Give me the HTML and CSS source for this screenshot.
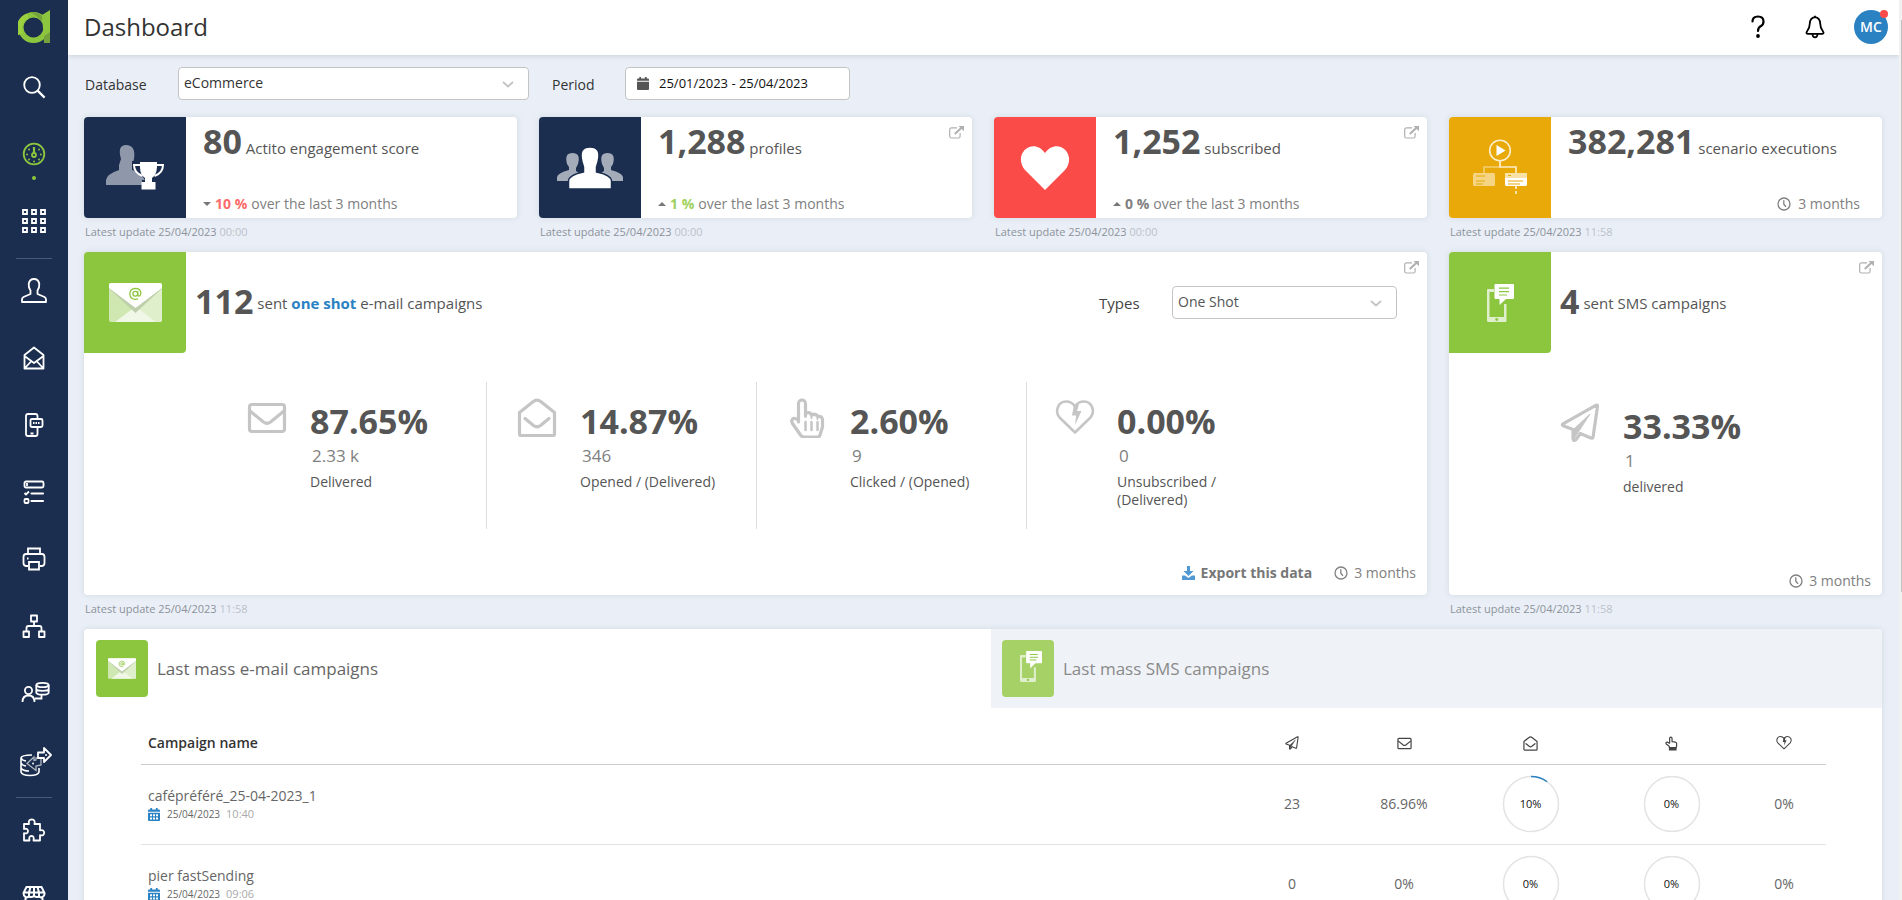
FILE: index.html
```html
<!DOCTYPE html>
<html lang="en">
<head>
<meta charset="utf-8">
<title>Dashboard</title>
<link rel="stylesheet" href="styles.css">
</head>
<body>
<svg class="defs" aria-hidden="true">
  <symbol id="i-external" viewBox="0 0 15 13"><path d="M8 1.8H2.5a1.8 1.8 0 0 0-1.8 1.8v6.6A1.8 1.8 0 0 0 2.500 12h6.800a1.800 1.800 0 0 0 1.800-1.800V7" fill="none" stroke="currentColor" stroke-width="1.200"/><path d="M5.800 8 13 1.200" stroke="currentColor" stroke-width="2"/><path d="M9.500 0H15v5.300z" fill="currentColor"/></symbol>
  <symbol id="i-chevron" viewBox="0 0 12 7"><path d="M1 1l5 4.500L11 1" fill="none" stroke="#c4c4c4" stroke-width="1.800"/></symbol>
  <symbol id="i-clock" viewBox="0 0 14 14"><circle cx="7" cy="7" r="6" fill="none" stroke="currentColor" stroke-width="1.300"/><path d="M6.800 3.200v4L9 9.700" fill="none" stroke="currentColor" stroke-width="1.300"/></symbol>
  <symbol id="i-envelope" viewBox="0 0 40 40"><g fill="none" stroke="currentColor" stroke-width="3.200" stroke-linejoin="round"><rect x="2.500" y="6.500" width="35" height="27" rx="2.500"/><path d="M3 13l13.500 11q3.500 2.500 7 0L37 13"/></g></symbol>
  <symbol id="i-open" viewBox="0 0 40 40"><g fill="none" stroke="currentColor" stroke-width="3.200" stroke-linejoin="round"><path d="M2.500 14.500v21.500q0 1.500 1.500 1.500h32q1.500 0 1.500-1.500V14.500L24 3.800q-4-3.200-8 0z"/><path d="M8 20.500l8.500 7q3.500 2.500 7 0l8.500-7" stroke-linecap="round"/></g></symbol>
  <symbol id="i-hand" viewBox="0 0 40 40"><g fill="none" stroke="currentColor" stroke-width="3.200" stroke-linecap="round" stroke-linejoin="round"><path d="M11.500 24V5.500a3 3 0 0 1 7 0V18v-2.500q4-2.500 6 1.500 4-2 6.500 1.500 4.500-.5 4.500 3.500v7l-2.500 8q-.5 2-2.500 2H17q-2 0-3.500-2l-8-11.500q-2-3.500 1-5 2-1 5 2"/><path d="M18.500 14v5M24.500 16v4M30.500 18v3" stroke-width="2"/></g><path d="M18.500 24v8M24.500 24v8M30.500 24v8" stroke="currentColor" stroke-width="2.500" stroke-linecap="round"/></symbol>
  <symbol id="i-thumb" viewBox="0 0 14 16"><path d="M5 8V2.500a1.300 1.300 0 0 1 2.600 0V6q4.900.3 4.900 1.800V11l-.7 1.500h-7L4.500 11 1.300 8.500Q.3 6.500 2.500 6.500L5 8" fill="none" stroke="currentColor" stroke-width="1.300" stroke-linejoin="round"/><path d="M4.200 12h8.300v3.500H4.200z" fill="currentColor"/></symbol>
  <symbol id="i-broken" viewBox="0 0 40 40"><path d="M20 34.500 4.500 19.500C-.5 13.500 3 3.500 11 3.500q6 0 9 5 3-5 9-5c8 0 11.500 10 6.500 16z" fill="none" stroke="currentColor" stroke-width="2.600" stroke-linejoin="round"/><path d="M19 6.500h5L22 13h4.500L20 27l1.200-9.500H17z" fill="currentColor"/></symbol>
  <symbol id="i-plane" viewBox="0 0 40 40"><g fill="none" stroke="currentColor" stroke-width="3.200" stroke-linejoin="round"><path d="M37.500 3.500q.3-2-1.800-1.200L3 20.800q-1.500 1.200.2 2L13 26.500v9.500q.5 2.500 2.800.8l4.500-6.300 10.500 4.500q1.900.6 2.300-1.200z"/><path d="M13 27 30 11 18 29.500l-4 6z" fill="currentColor" stroke-width="1"/></g></symbol>
  <symbol id="i-cal" viewBox="0 0 12 13"><path d="M0 2.500q0-1 1-1h1.300V0h1.800v1.500h3.800V0h1.800v1.500H11q1 0 1 1v1.200H0z" fill="#2b82c3"/><path d="M0 4.700h12V12q0 1-1 1H1q-1 0-1-1z" fill="#2b82c3"/><path d="M2 6.300h2v2H2zm3 0h2v2H5zm3 0h2v2H8zM2 9.500h2v2H2zm3 0h2v2H5zm3 0h2v2H8z" fill="#fff"/></symbol>
  <symbol id="i-mailart" viewBox="0 0 53 39"><rect width="53" height="39" rx="2" fill="#cfe7b0"/><path d="M26.500 24 53 5v32q0 2-2 2h-4z" fill="#dfeecb"/><path d="M6 39 26.500 23.500 47 39z" fill="#f0f7e6"/><path d="M0 5.500 26.500 30 53 5.500V2H0z" fill="#bfceab"/><path d="M2 0h49q2 0 2 2v3L26.500 25 0 5V2q0-2 2-2z" fill="#fff"/><g fill="none" stroke="#8cc63f" stroke-width="1.300"><circle cx="26.300" cy="10.800" r="2.400"/><path d="M28.800 8.300v3.700q.3 1.500 1.800 1 1.300-1 1.300-3-.5-4.500-5.500-4.600-5.500.4-5.600 5.600.4 5.400 5.900 5.300l2.300-.4"/></g></symbol>
  <symbol id="i-smsart" viewBox="0 0 27 38"><path d="M1 5h6v3H2.500v25H17V20h2.500v16.500q0 1.500-1.500 1.500H1.500Q0 38 0 36.500V6q0-1 1-1z" fill="#e0efcb"/><path d="M2.500 33H17v0h2v5H1v-5z" fill="#e0efcb"/><circle cx="9.700" cy="35.500" r="1.400" fill="#8cc63f"/><path d="M8.500 0H26q1 0 1 1v13q0 1-1 1h-7l-6.500 6v-6h-4q-1 0-1-1V1q0-1 1-1z" fill="#fff"/><path d="M12 4.200h10M12 7.700h10M12 11h8" stroke="#8cc63f" stroke-width="1.200"/></symbol>
</svg>
<div class="app">
  <nav class="side" aria-label="Main">
    <a class="logo" href="#" aria-label="Home"><svg width="32" height="34" viewBox="0 0 32 34"><circle cx="15.500" cy="17.500" r="12.700" fill="none" stroke="#8cc63f" stroke-width="5.500"/><path d="M2.800 24A12.700 12.700 0 0 1 10 6" fill="none" stroke="#9bd03f" stroke-width="5.500"/><path d="M12 2.500Q22 1 26 9l-3 2Q19 5 12 2.500z" fill="#73a33a"/><path d="M24 5 32 0v32l-6 1z" fill="#8cc63f"/><path d="M26 26l6-4v11h-6z" fill="#73a33a"/></svg></a>
    <a class="nav" href="#" aria-label="Search"><svg width="24" height="24" viewBox="0 0 24 24"><circle cx="10" cy="10" r="7.800"/><path d="M15.600 15.600l7 7" stroke-width="2.200"/></svg></a>
    <a class="nav active" href="#" aria-label="Dashboard"><svg width="24" height="24" viewBox="0 0 24 24"><circle cx="12" cy="12" r="10.300"/><circle cx="12" cy="13" r="2"/><path d="M12 5v6" stroke-width="2.200"/><path d="M5 12.500h.1M18.800 12.500h.1M7 7.500h.1M17 7.500h.1M7 17.500h.1M17 17.500h.1M12 19.500h.1" stroke-linecap="round"/></svg></a>
    <a class="nav" href="#" aria-label="Applications"><svg width="24" height="24" viewBox="0 0 24 24"><path d="M1 1h4v4H1zm9 0h4v4h-4zm9 0h4v4h-4zM1 10h4v4H1zm9 0h4v4h-4zm9 0h4v4h-4zM1 19h4v4H1zm9 0h4v4h-4zm9 0h4v4h-4z"/></svg></a>
    <hr class="sep">
    <a class="nav" href="#" aria-label="Profiles"><svg width="26" height="25" viewBox="0 0 26 25"><path d="M9.500 12.500Q7.500 10 7.700 6 8.500 1 13 1t5.300 5q.2 4-1.800 6.500V16l7 3q1.500 1 1.500 2.500V24H1v-2.500Q1 20 2.500 19l7-3z" stroke-linejoin="round"/></svg></a>
    <a class="nav" href="#" aria-label="E-mail"><svg width="24" height="24" viewBox="0 0 24 24"><path d="M2.500 9 12 1.500 21.500 9v13.500h-19zM2.500 10l9.500 7 9.500-7M3 22l6.500-7M21 22l-6.500-7" stroke-linejoin="round"/></svg></a>
    <a class="nav" href="#" aria-label="Mobile"><svg width="24" height="24" viewBox="0 0 24 24"><path d="M15.500 5V3q0-2-2-2H6Q4 1 4 3v18q0 2 2 2h7.500q2 0 2-2v-7.500M8.500 20.500h3"/><path d="M10 6h9q1.500 0 1.500 1.500v5Q20.500 14 19 14h-9q-1.500 0-1.500-1.500v-5Q8.500 6 10 6z"/><path d="M11 10h7" stroke-dasharray="1.500 1"/></svg></a>
    <a class="nav" href="#" aria-label="Forms"><svg width="24" height="24" viewBox="0 0 24 24"><rect x="2.500" y="1.500" width="19" height="6" rx="1.500"/><path d="M5 3v3M2.500 13l1.500 1.500 3-3"/><path d="M9.500 13.500h11.500M9.500 21h11.500" stroke-width="2.200" stroke-linecap="round"/><rect x="2.500" y="19" width="4" height="4" rx="1"/></svg></a>
    <a class="nav" href="#" aria-label="Print"><svg width="24" height="24" viewBox="0 0 24 24"><path d="M6 7V1.500h12V7M6 19H4q-2.500-.3-2.500-3V10Q1.500 7 4 7h16q2.500 0 2.500 3v6q0 2.700-2.500 3h-2"/><path d="M7 15h10v7.500H7zM5 11.500h1.500"/></svg></a>
    <a class="nav" href="#" aria-label="Scenarios"><svg width="24" height="24" viewBox="0 0 24 24"><path d="M9 1.500h6v6H9zM1.500 17.500h5.500v5.500H1.500zM17 17.500h5.500v5.500H17zM12 8v4M4.500 17v-3q0-2 2-2h11q2 0 2 2v3" stroke-linejoin="round"/></svg></a>
    <a class="nav" href="#" aria-label="Profile data"><svg class="wide" width="30" height="24" viewBox="0 0 30 24"><circle cx="7.500" cy="9.500" r="3.600"/><path d="M1.500 21q0-6.500 6-6.500t6 6.500M14 17.500h6.500V14"/><ellipse cx="21.500" cy="4" rx="6.200" ry="2.200"/><path d="M15.300 4v7.500q0 2.200 6.200 2.200t6.200-2.200V4M15.300 7.800q0 2 6.200 2t6.200-2"/></svg></a>
    <a class="nav" href="#" aria-label="Data transfer"><svg class="thin" width="32" height="30" viewBox="0 0 32 30"><path d="M12 8Q1.500 8 1 11v14q1 3.500 9 3.500t9-3.500v-4M1 11q1 2.500 5 3M1 16q1 2.500 5 3M1 21q2 3 8 3" stroke-width="1.600"/><path d="M7 16.500l7-6.500v3.500l2-.5v-2h5v7l-5 1v4.500z" opacity=".65"/><path d="M18 5.500h6V1l7 7-7 7v-4h-6z" stroke-width="1.800" stroke-linejoin="round"/><path d="M26 8h.1M13 16.500h.1" stroke-width="1.800" stroke-linecap="round"/></svg></a>
    <hr class="sep">
    <a class="nav" href="#" aria-label="Extensions"><svg width="24" height="24" viewBox="0 0 24 24"><path d="M7 6h-5v5q4-1 4 2.200-.3 3-4 2v7.300h5.500q-1-4.500 2-4.700 3 .2 2 4.700h6.500v-5.300q4 1 4.200-2.400-.2-3.500-4.200-2.500V6H12.500q1-4.500-2.700-4.700Q6 1.500 7 6z" stroke-linejoin="round"/></svg></a>
    <a class="nav" href="#" aria-label="Marketplace"><svg width="24" height="24" viewBox="0 0 24 24"><path d="M4.500 2h15l3 6q.3 3-2 4t-3.500-.8q-2 1.800-5 0-3 1.800-5 0Q5.500 13 3.500 12T1.500 8zM1.500 7.500h21M8.500 2 7 7.500V11M15.500 2 17 7.500V11M12 2v9M3.500 13v9h17v-9" stroke-width="2"/></svg></a>
  </nav>
  <div class="page">
    <header class="top">
      <h1 class="title">Dashboard</h1>
      <div class="tools">
        <button class="tool" aria-label="Help"><svg width="16" height="24" viewBox="0 0 16 24"><path d="M2.500 6.500Q2.500 1.500 8 1.500t5.500 5Q13.500 9.500 11 11q-3 1.500-3 5" fill="none" stroke="#000" stroke-width="2.200" stroke-linecap="round"/><circle cx="8" cy="21" r="1.900"/></svg></button>
        <button class="tool" aria-label="Notifications"><svg width="20" height="24" viewBox="0 0 20 24"><path d="M10 2.200q-5 .8-5.200 6.300Q4.800 13 2 16.500q-1.500 2 .8 2.300h14.400q2.300-.3.800-2.300-2.800-3.500-2.800-8Q15 3 10 2.200zM7.500 19.500q.3 2.800 2.500 2.800t2.500-2.800M10 2.200V.8" fill="none" stroke="#000" stroke-width="1.800" stroke-linejoin="round"/></svg></button>
        <button class="avatar" aria-label="Account">MC<span class="badge"></span></button>
      </div>
    </header>
    <main class="main">
      <form class="filters">
        <label class="label-db" for="db">Database</label>
        <span class="select select-db"><select id="db"><option>eCommerce</option></select><svg class="chev" width="12" height="7"><use href="#i-chevron"/></svg></span>
        <label class="label-period" for="period">Period</label>
        <span class="date"><svg width="12" height="13" viewBox="0 0 12 13"><path d="M0 2.500q0-1 1-1h1.300V0h1.800v1.500h3.800V0h1.800v1.500H11q1 0 1 1v1.200H0zM0 4.700h12V12q0 1-1 1H1q-1 0-1-1z" fill="#555"/></svg><input id="period" type="text" value="25/01/2023 - 25/04/2023"></span>
      </form>
      <div class="grid">
        <section class="cell">
          <div class="card kpi">
            <div class="tile navy"><svg width="58" height="46" viewBox="0 0 58 46"><path d="M15 14q-4-14 5-14 10 0 8 14l-2 6v5q14 4 14 15H0v-5q1-6 13-10v-5z" fill="#8e98aa"/><path d="M26 16h32v6q-2 8-9 10l-2 3h3v11H36V35h3l-2-3q-10-4-11-12z" fill="#1b2e4f"/><path d="M34 17h17v5q-.5 8-5 11v4h3.500v7.500H35.500V37H39v-4q-5-3-5-11z" fill="#fff"/><path d="M35 20h-7q0 8 8.500 11M50 20h7q0 8-8.500 11" fill="none" stroke="#fff" stroke-width="2"/></svg></div>
            <div class="kpi-body"><p class="head"><b class="big">80</b> Actito engagement score</p><p class="trend"><i class="caret down"></i><b class="red">10 %</b> over the last 3 months</p></div>
          </div>
          <p class="upd">Latest update 25/04/2023 <time>00:00</time></p>
        </section>
        <section class="cell">
          <div class="card kpi">
            <div class="tile navy"><svg width="66" height="42" viewBox="0 0 66 42"><g fill="#a4abb9"><path d="M10 17Q7 6 15.500 6T21 17l-2 4v3l3 2-9 8H0v-4q1-4 12-7v-3z"/><path d="M56 17Q59 6 50.500 6T45 17l2 4v3l-3 2 9 8h13v-4q-1-4-12-7v-3z"/></g><path d="M25 15Q21 0 33 0t8 15l-1.500 5v5Q54 28 54.500 34v8h-43v-8Q12 28 26.500 25v-5z" fill="#fff" stroke="#1b2e4f" stroke-width="1.500"/></svg></div>
            <div class="kpi-body"><p class="head"><b class="big">1,288</b> profiles</p><p class="trend"><i class="caret up"></i><b class="green">1 %</b> over the last 3 months</p></div>
            <a class="ext" href="#" aria-label="Open profiles"><svg width="15" height="13"><use href="#i-external"/></svg></a>
          </div>
          <p class="upd">Latest update 25/04/2023 <time>00:00</time></p>
        </section>
        <section class="cell">
          <div class="card kpi">
            <div class="tile red-bg"><svg width="50" height="44" viewBox="0 0 50 44"><path d="M25 44 5 24C-8 8 13-10 25 7 37-10 58 8 45 24z" fill="#fff"/></svg></div>
            <div class="kpi-body"><p class="head"><b class="big">1,252</b> subscribed</p><p class="trend"><i class="caret up"></i><b>0 %</b> over the last 3 months</p></div>
            <a class="ext" href="#" aria-label="Open subscribers"><svg width="15" height="13"><use href="#i-external"/></svg></a>
          </div>
          <p class="upd">Latest update 25/04/2023 <time>00:00</time></p>
        </section>
        <section class="cell">
          <div class="card kpi">
            <div class="tile amber"><svg width="54" height="57" viewBox="0 0 54 57"><circle cx="27" cy="11.500" r="10.300" fill="none" stroke="#fbeecb" stroke-width="1.600"/><path d="M23.500 6v11l9-5.500z" fill="#fff"/><path d="M27 22v6H11v6" fill="none" stroke="#f3cf74" stroke-width="1.600"/><path d="M27 22v6h16v6" fill="none" stroke="#fbeecb" stroke-width="1.600"/><rect y="34" width="22" height="13" rx="1.500" fill="#f5d583"/><path d="M3 37h9" stroke="#e8a909" stroke-width="1"/><path d="M3 42h9M3 45h7" stroke="#e8a909" stroke-width="1.200"/><rect x="32" y="34" width="22" height="13" rx="1.500" fill="#fff"/><path d="M32 39v-4q0-1 1-1h20q1 0 1 1v4z" fill="#f8e2a8"/><path d="M35 36.500h3M35 42h15M35 45h12" stroke="#e8a909" stroke-width="1.200"/><path d="M43 47v10" stroke="#f8e2a8" stroke-width="2" stroke-dasharray="3 2"/></svg></div>
            <div class="kpi-body"><p class="head"><b class="big">382,281</b> scenario executions</p><p class="trend right"><svg width="14" height="14"><use href="#i-clock"/></svg>3 months</p></div>
          </div>
          <p class="upd">Latest update 25/04/2023 <time>11:58</time></p>
        </section>
        <section class="cell wide3">
          <div class="card tall">
            <div class="card-top">
              <div class="tile lime"><svg width="53" height="39"><use href="#i-mailart"/></svg></div>
              <p class="head"><b class="big">112</b><span>sent <a class="link" href="#">one shot</a> e-mail campaigns</span></p>
              <label class="label-types" for="types">Types</label>
              <span class="select select-types"><select id="types"><option>One Shot</option></select><svg class="chev" width="12" height="7"><use href="#i-chevron"/></svg></span>
            </div>
            <div class="stats">
              <div class="stat"><svg class="sicon" width="40" height="40"><use href="#i-envelope"/></svg><div class="stat-text"><b class="big">87.65%</b><span class="count">2.33 k</span><span class="name">Delivered</span></div></div>
              <div class="stat"><svg class="sicon" width="40" height="40"><use href="#i-open"/></svg><div class="stat-text"><b class="big">14.87%</b><span class="count">346</span><span class="name">Opened / (Delivered)</span></div></div>
              <div class="stat"><svg class="sicon" width="40" height="40"><use href="#i-hand"/></svg><div class="stat-text"><b class="big">2.60%</b><span class="count">9</span><span class="name">Clicked / (Opened)</span></div></div>
              <div class="stat last"><svg class="sicon" width="40" height="40"><use href="#i-broken"/></svg><div class="stat-text"><b class="big">0.00%</b><span class="count">0</span><span class="name">Unsubscribed / (Delivered)</span></div></div>
            </div>
            <div class="foot"><button class="export"><svg width="13" height="14" viewBox="0 0 13 14"><path d="M5 0h3v5h3.500l-5 5-5-5H5zM0 9.500h3l3.500 2.500L10 9.500h3V14H0z" fill="#5299d3"/></svg>Export this data</button><span class="span"><svg width="14" height="14"><use href="#i-clock"/></svg>3 months</span></div>
            <a class="ext" href="#" aria-label="Open e-mail campaigns"><svg width="15" height="13"><use href="#i-external"/></svg></a>
          </div>
          <p class="upd">Latest update 25/04/2023 <time>11:58</time></p>
        </section>
        <section class="cell">
          <div class="card tall">
            <div class="card-top">
              <div class="tile lime"><svg width="27" height="38"><use href="#i-smsart"/></svg></div>
              <p class="head"><b class="big">4</b><span>sent SMS campaigns</span></p>
            </div>
            <div class="stats sms"><div class="stat"><svg class="sicon" width="40" height="40"><use href="#i-plane"/></svg><div class="stat-text"><b class="big">33.33%</b><span class="count">1</span><span class="name">delivered</span></div></div></div>
            <div class="foot low"><span class="span"><svg width="14" height="14"><use href="#i-clock"/></svg>3 months</span></div>
            <a class="ext" href="#" aria-label="Open SMS campaigns"><svg width="15" height="13"><use href="#i-external"/></svg></a>
          </div>
          <p class="upd">Latest update 25/04/2023 <time>11:58</time></p>
        </section>
      </div>
      <section class="card last-card">
        <div class="tabs" role="tablist">
          <button class="tab" role="tab" aria-selected="true"><span class="mini"><svg width="28" height="21"><use href="#i-mailart"/></svg></span>Last mass e-mail campaigns</button>
          <button class="tab off" role="tab" aria-selected="false"><span class="mini"><svg width="22" height="31"><use href="#i-smsart"/></svg></span>Last mass SMS campaigns</button>
        </div>
        <table class="list">
          <thead><tr><th class="c-name" scope="col">Campaign name</th>
            <th class="c-s" scope="col" aria-label="Sent"><svg width="14" height="14"><use href="#i-plane"/></svg></th>
            <th class="c-s" scope="col" aria-label="Delivered"><svg width="15" height="15"><use href="#i-envelope"/></svg></th>
            <th class="c-m" scope="col" aria-label="Opened"><svg width="15" height="15"><use href="#i-open"/></svg></th>
            <th class="c-m" scope="col" aria-label="Clicked"><svg width="13" height="15"><use href="#i-thumb"/></svg></th>
            <th class="c-x" scope="col" aria-label="Unsubscribed"><svg width="16" height="16"><use href="#i-broken"/></svg></th></tr></thead>
          <tbody>
            <tr><td class="c-name"><a class="camp" href="#">cafépréféré_25-04-2023_1</a><span class="when"><svg width="12" height="13"><use href="#i-cal"/></svg><span>25/04/2023</span><time>10:40</time></span></td><td>23</td><td>86.96%</td>
              <td><span class="ring"><svg width="58" height="58" viewBox="0 0 58 58"><circle class="track" cx="29" cy="29" r="27.500"/><circle class="arc" cx="29" cy="29" r="27.500" pathLength="100"/></svg><span>10%</span></span></td>
              <td><span class="ring"><svg width="58" height="58" viewBox="0 0 58 58"><circle class="track" cx="29" cy="29" r="27.500"/></svg><span>0%</span></span></td><td>0%</td></tr>
            <tr><td class="c-name"><a class="camp" href="#">pier fastSending</a><span class="when"><svg width="12" height="13"><use href="#i-cal"/></svg><span>25/04/2023</span><time>09:06</time></span></td><td>0</td><td>0%</td>
              <td><span class="ring"><svg width="58" height="58" viewBox="0 0 58 58"><circle class="track" cx="29" cy="29" r="27.500"/></svg><span>0%</span></span></td>
              <td><span class="ring"><svg width="58" height="58" viewBox="0 0 58 58"><circle class="track" cx="29" cy="29" r="27.500"/></svg><span>0%</span></span></td><td>0%</td></tr>
          </tbody>
        </table>
      </section>
    </main>
  </div>
  <div class="scroll"><div class="thumb"></div></div>
</div>
</body>
</html>
```

FILE: styles.css
```css
* { box-sizing: border-box; }
body { margin: 0; font-family: "Open Sans", "Noto Sans", sans-serif; font-size: 14px; line-height: 18px; color: #555; background: #eaeff7; }
p, h1 { margin: 0; }
a { color: inherit; text-decoration: none; }
button { font: inherit; color: inherit; background: none; border: 0; padding: 0; cursor: pointer; }
svg { display: block; flex: none; }
.defs { position: absolute; width: 0; height: 0; }

.app { display: flex; height: 100vh; overflow: hidden; }
.side { flex: none; width: 68px; background: #1b2e4f; overflow: hidden; }
.logo { display: flex; height: 53px; align-items: center; justify-content: center; }
.nav { position: relative; display: flex; height: 67px; align-items: center; justify-content: center; }
.nav svg { fill: none; stroke: #fff; stroke-width: 1.8px; }
.nav .thin { stroke-width: 1.3px; margin: 4px 0 0 4px; }
.nav .wide { margin-left: 4px; }
.active svg { stroke: #8cc63f; }
.active::after { content: ""; position: absolute; left: 32px; bottom: 7px; width: 4px; height: 4px; border-radius: 50%; background: #8cc63f; }
.sep { width: 36px; height: 1px; margin: 4px auto -2px; border: 0; background: #4c5a75; }

.page { flex: 1; min-width: 0; overflow: hidden; }
.scroll { flex: none; width: 3px; padding: 20px 0 0 2px; background: #f1f1f1; }
.thumb { height: 65%; background: #c1c1c1; }

.top { position: relative; display: flex; align-items: center; justify-content: space-between; height: 55px; padding: 0 11px 2px 16px; background: #fff; box-shadow: 0 1px 5px rgba(60, 80, 80, .2); }
.title { font-size: 24px; line-height: 30px; font-weight: 500; color: #333; }
.tools { display: flex; align-items: center; gap: 39px; }
.avatar { position: relative; width: 34px; height: 34px; margin-left: -10px; border-radius: 50%; background: #2b82c3; color: #fff; font-size: 14px; font-weight: 600; }
.badge { position: absolute; top: 0; right: 0; width: 8px; height: 8px; border-radius: 50%; background: #fb4b4b; }

.main { padding: 12px 17px 0 16px; }
.filters { display: flex; align-items: center; height: 33px; margin-bottom: 17px; color: #333; }
.filters label { padding: 3px 0 0 1px; }
.label-db { width: 94px; }
.select { position: relative; display: block; height: 33px; }
.select-db { width: 351px; }
.select select { width: 100%; height: 100%; padding: 0 30px 2px 5px; font: inherit; color: inherit; background: #fff; border: 1px solid #c4c4c4; border-radius: 4px; appearance: none; }
.chev { position: absolute; right: 15px; top: 14px; pointer-events: none; }
.label-period { width: 74px; margin-left: 22px; }
.date { display: flex; align-items: center; width: 225px; height: 33px; padding-left: 11px; gap: 10px; background: #fff; border: 1px solid #c4c4c4; border-radius: 4px; }
.date input { flex: 1; min-width: 0; padding: 0 0 2px; border: 0; background: none; font: inherit; font-size: 13px; color: #111; }

.grid { display: grid; grid-template-columns: repeat(4, 1fr); gap: 12px 22px; }
.wide3 { grid-column: span 3; }
.card { position: relative; background: #fff; border-radius: 4px; box-shadow: 0 0 6px rgba(60, 80, 80, .13); overflow: hidden; }
.kpi { display: flex; height: 101px; }
.tile { display: flex; flex: none; align-items: center; justify-content: center; width: 102px; height: 101px; }
.navy { background: #1b2e4f; }
.red-bg { background: #fb4b48; }
.amber { background: #e8a909; }
.lime { background: #8cc63f; border-bottom-right-radius: 4px; }
.kpi-body { display: flex; flex: 1; flex-direction: column; justify-content: space-between; padding: 2px 22px 5px 17px; }
.head { font-size: 15px; line-height: 44px; white-space: nowrap; }
.big { font-size: 34px; line-height: 44px; font-weight: 700; color: #555; }
.trend { display: flex; align-items: center; gap: 4px; color: #808080; white-space: nowrap; }
.right { justify-content: flex-end; gap: 7px; }
.caret { width: 0; height: 0; border: 4px solid transparent; }
.down { border-top-color: #777; border-bottom: 0; }
.up { border-bottom-color: #777; border-top: 0; }
.red { color: #fb6b6b; }
.green { color: #9fd15c; }
.ext { position: absolute; top: 9px; right: 8px; color: #b0b0b0; }
.upd { padding-left: 1px; margin-top: 6px; font-size: 11px; line-height: 16px; color: #8c929b; }
.upd time { color: #bcc1c9; }

.tall { display: flex; flex-direction: column; min-height: 343px; }
.card-top { display: flex; align-items: center; padding-right: 30px; }
.card-top .head { display: flex; align-items: center; flex: 1; gap: 4px; padding-left: 9px; }
.card-top .big { padding-bottom: 4px; }
.label-types { width: 73px; color: #444; font-size: 15px; }
.select-types { width: 225px; }
.link { color: #2b82c3; font-weight: 700; }
.stats { display: flex; margin: 29px 0 0 133px; }
.stat { display: flex; width: 270px; min-height: 147px; padding: 16px 30px 0; gap: 23px; border-right: 1px solid #ddd; }
.stat.last { border: 0; padding-left: 28px; gap: 22px; padding-right: 40px; }
.sicon { color: #c5c5c5; }
.stat-text { display: flex; flex-direction: column; padding-top: 1px; }
.count { padding-left: 2px; margin-top: 1px; font-size: 17px; line-height: 24px; color: #808080; }
.name { margin-top: 5px; }
.sms { margin: 34px 0 0 81px; }
.sms .stat { border: 0; }
.foot { display: flex; justify-content: flex-end; gap: 22px; margin-top: auto; padding: 0 11px 13px 0; color: #808080; }
.low { padding-bottom: 5px; }
.export, .span { display: flex; align-items: center; gap: 6px; }
.export { font-weight: 700; color: #777; }

.last-card { margin-top: 12px; border-radius: 4px 4px 0 0; }
.tabs { display: grid; grid-template-columns: 907fr 891fr; }
.tab { display: flex; align-items: center; gap: 9px; height: 79px; padding-left: 12px; font-size: 17px; color: #666; }
.off { padding-left: 11px; background: #eff2f7; color: #8a8a8a; }
.mini { display: flex; align-items: center; justify-content: center; width: 52px; height: 57px; border-radius: 4px; background: #8cc63f; }
.off .mini { padding: 0 0 4px 6px; background: #a5d166; }
.list { width: calc(100% - 113px); margin: 15px 56px 0 57px; border-collapse: collapse; table-layout: fixed; }
.list th { height: 41px; padding: 0; border-bottom: 1px solid #ccc; font-weight: 600; }
.list th svg { margin: 0 auto; color: #444; }
.list td { height: 80px; padding: 0; border-bottom: 1px solid #e2e2e2; text-align: center; color: #666; }
.list .c-name { padding-left: 7px; text-align: left; color: #333; }
.c-s { width: 112px; }
.c-m { width: 141px; }
.c-x { width: 84px; }
.list .camp { display: block; line-height: 20px; color: #666; }
.when { display: flex; align-items: center; height: 17px; font-size: 10px; color: #666; }
.when span { margin: 0 6px 0 7px; }
.when time { font-size: 11px; color: #aaa; }
.ring { position: relative; display: flex; align-items: center; justify-content: center; height: 58px; font-size: 11px; color: #111; }
.ring svg { position: absolute; }
.track { fill: none; stroke: #e3e3e3; stroke-width: 1.5px; }
.arc { fill: none; stroke: #2b82c3; stroke-width: 1.5px; stroke-dasharray: 10 90; transform: rotate(-90deg); transform-origin: center; }
```
